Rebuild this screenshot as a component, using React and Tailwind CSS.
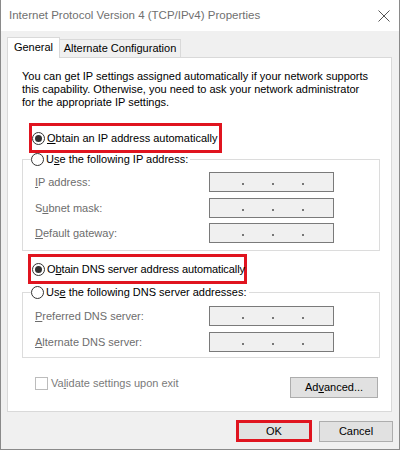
import React from "react";

const Radio = ({ checked }) => (
  <span className="w-[13px] h-[13px] rounded-full border border-[#333] bg-white flex items-center justify-center shrink-0">
    {checked && <span className="w-[7px] h-[7px] rounded-full bg-[#333]" />}
  </span>
);

const Key = ({ children }) => <span className="underline underline-offset-[1px]">{children}</span>;

const IpField = () => (
  <div className="w-[125px] h-[20px] border border-[#7a7a7a] bg-[#f0f0f0] flex items-end pl-[32px] gap-[28px] pb-[6px]">
    <span className="w-[2px] h-[2px] bg-[#777]" />
    <span className="w-[2px] h-[2px] bg-[#777]" />
    <span className="w-[2px] h-[2px] bg-[#777]" />
  </div>
);

const FieldRow = ({ label, className }) => (
  <div className={"flex items-center pl-[12px] " + className}>
    <span className="w-[174px] text-[#6d6d6d]">{label}</span>
    <IpField />
  </div>
);

const App = () => {
  return (
    <div className="w-[400px] h-[450px] bg-[#f0f0f0] border-x border-b border-[#8a8a8a] flex flex-col whitespace-nowrap text-[11px] leading-[13px] text-black font-['Liberation_Sans',Arial,sans-serif]">
      <div className="h-[31px] shrink-0 bg-white flex items-center justify-between pl-[8px] pr-[9px]">
        <span className="text-[11.5px] text-[#707070]">Internet Protocol Version 4 (TCP/IPv4) Properties</span>
        <svg width="12" height="12" viewBox="0 0 12 12" className="mt-[1px]">
          <path d="M0.5 0.5 L11.5 11.5 M11.5 0.5 L0.5 11.5" stroke="#555" strokeWidth="1" fill="none" />
        </svg>
      </div>

      <div className="pl-[6px] pt-[6px]">
        <div className="flex items-end">
          <div className="relative z-10 -mb-px h-[21px] w-[53px] bg-white border border-b-0 border-[#d9d9d9] flex items-start justify-center pt-[3px]">
            General
          </div>
          <div className="h-[18px] w-[121px] border border-b-0 border-l-0 border-[#d9d9d9] flex items-center justify-center">
            Alternate Configuration
          </div>
        </div>

        <div className="w-[385px] h-[355px] bg-white border border-[#d9d9d9] pt-[12px] flex flex-col">
          <p className="ml-[14px]">
            You can get IP settings assigned automatically if your network supports
            <br />
            this capability. Otherwise, you need to ask your network administrator
            <br />
            for the appropriate IP settings.
          </p>

          <div className="mt-[14px] ml-[21px] w-[193px] h-[30px] border-[3px] border-[#e0141f] flex items-center gap-[2px]">
            <Radio checked />
            <span>
              <Key>O</Key>btain an IP address automatically
            </span>
          </div>

          <fieldset className="ml-[14px] w-[358px] border border-[#dcdcdc] pb-[7px]">
            <legend className="ml-[8px] pr-[2px] flex items-center gap-[2px] h-[13px]">
              <Radio />
              <span>
                U<Key>s</Key>e the following IP address:
              </span>
            </legend>
            <FieldRow className="mt-[6px]" label={<><Key>I</Key>P address:</>} />
            <FieldRow className="mt-[6px]" label={<>S<Key>u</Key>bnet mask:</>} />
            <FieldRow className="mt-[5px]" label={<><Key>D</Key>efault gateway:</>} />
          </fieldset>

          <div className="mt-[3px] ml-[20px] w-[219px] h-[30px] border-[3px] border-[#e0141f] pl-[1px] flex items-center gap-[2px]">
            <Radio checked />
            <span className="tracking-[-0.1px]">
              O<Key>b</Key>tain DNS server address automatically
            </span>
          </div>

          <fieldset className="mt-[2px] ml-[14px] w-[358px] border border-[#dcdcdc] pb-[5px]">
            <legend className="ml-[8px] pr-[2px] flex items-center gap-[2px] h-[13px]">
              <Radio />
              <span>
                Us<Key>e</Key> the following DNS server addresses:
              </span>
            </legend>
            <FieldRow className="mt-[7px]" label={<><Key>P</Key>referred DNS server:</>} />
            <FieldRow className="mt-[6px]" label={<><Key>A</Key>lternate DNS server:</>} />
          </fieldset>

          <div className="mt-[19px] flex items-start justify-between">
            <div className="ml-[27px] flex items-center gap-[3px] text-[#7a7a7a]">
              <span className="w-[13px] h-[13px] border border-[#bcbcbc] bg-white" />
              <span>
                Va<Key>l</Key>idate settings upon exit
              </span>
            </div>
            <button className="mr-[13px] w-[88px] h-[21px] bg-[#e1e1e1] border border-[#adadad] flex items-center justify-center">
              Ad<Key>v</Key>anced...
            </button>
          </div>
        </div>
      </div>

      <div className="mt-[8px] flex justify-end items-center gap-[7px] pr-[6px]">
        <button className="w-[76px] h-[22px] bg-[#e1e1e1] border-[3px] border-[#e0141f] flex items-center justify-center">
          OK
        </button>
        <button className="w-[74px] h-[21px] bg-[#e1e1e1] border border-[#adadad] flex items-center justify-center">
          Cancel
        </button>
      </div>
    </div>
  );
};

export default App;
